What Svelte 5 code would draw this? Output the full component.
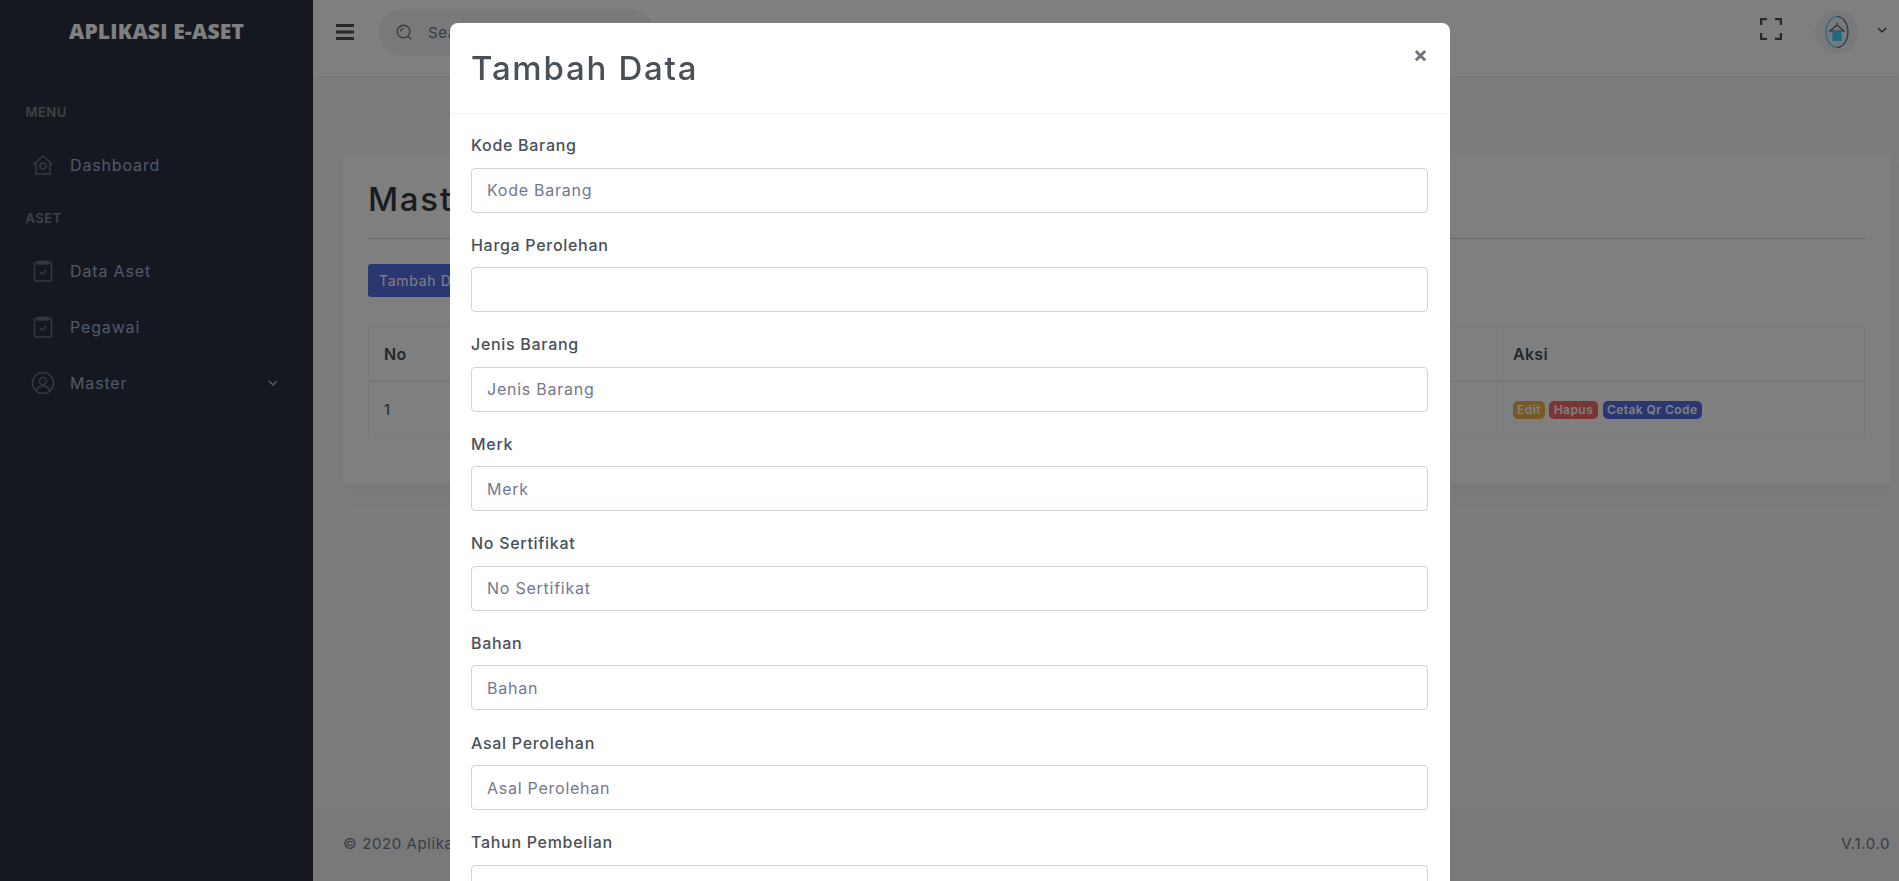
<script>
  const fields = [
    ['Kode Barang', 'Kode Barang'],
    ['Harga Perolehan', ''],
    ['Jenis Barang', 'Jenis Barang'],
    ['Merk', 'Merk'],
    ['No Sertifikat', 'No Sertifikat'],
    ['Bahan', 'Bahan'],
    ['Asal Perolehan', 'Asal Perolehan'],
    ['Tahun Pembelian', '']
  ];
</script>

<div class="layout">
  <aside class="sidebar">
    <div class="logo">APLIKASI E-ASET</div>
    <div class="menu-title first">MENU</div>
    <a class="item">
      <svg viewBox="0 0 24 24" class="mi"><path d="M2.500 11.500 12 3l9.500 8.500M5 9.500V21h14V9.500"/><circle cx="12" cy="13" r="3"/></svg>
      <span>Dashboard</span>
    </a>
    <div class="menu-title">ASET</div>
    <a class="item">
      <svg viewBox="0 0 24 24" class="mi"><rect x="3.500" y="3.500" width="17" height="18.500" rx="1"/><path d="M7 2.500h10v2.500H7z" class="fill"/><path d="m9 13 2.200 2.200L15.500 11"/></svg>
      <span>Data Aset</span>
    </a>
    <a class="item">
      <svg viewBox="0 0 24 24" class="mi"><rect x="3.500" y="3.500" width="17" height="18.500" rx="1"/><path d="M7 2.500h10v2.500H7z" class="fill"/><path d="m9 13 2.200 2.200L15.500 11"/></svg>
      <span>Pegawai</span>
    </a>
    <a class="item">
      <svg viewBox="0 0 24 24" class="mi"><circle cx="12" cy="12" r="10.500"/><circle cx="12" cy="10" r="3.500"/><path d="M5.500 19.500c1-3 3.500-4.500 6.500-4.500s5.500 1.500 6.500 4.500"/></svg>
      <span>Master</span>
      <svg viewBox="0 0 12 12" class="chev"><path d="m2 4 4 4 4-4"/></svg>
    </a>
  </aside>

  <div class="main">
    <header class="topbar">
      <div class="left">
        <svg viewBox="0 0 18 16" class="burger"><path d="M0 1.500h18M0 8h18M0 14.500h18"/></svg>
        <div class="search">
          <svg viewBox="0 0 16 16" class="sicon"><circle cx="7.500" cy="7.500" r="6.300"/><path d="m12 12 3 3.200M4.500 7.500a3 3 0 0 1 3-3"/></svg>
          <span>Search...</span>
        </div>
      </div>
      <div class="right">
        <svg viewBox="0 0 22 22" class="full"><path d="M1 7V1h6M15 1h6v6M21 15v6h-6M7 21H1v-6"/></svg>
        <div class="avatar">
          <svg viewBox="0 0 24 34" class="logo-mark">
            <path d="M12 1.500C6 1.500 1 8.500 1 17s5 15.500 11 15.500" class="ring"/>
            <path d="M12 1.500c6 0 11 7 11 15.500s-5 15.500-11 15.500" class="ring dark"/>
            <path d="M12 10 5 16h14zM12 10V7.500" class="hanger"/>
            <rect x="7.300" y="16" width="9.400" height="10" class="box"/>
          </svg>
        </div>
        <svg viewBox="0 0 12 12" class="chev top"><path d="m2 4 4 4 4-4"/></svg>
      </div>
    </header>

    <section class="page">
      <div class="card">
        <h4>Master Barang</h4>
        <button class="add">Tambah Data</button>
        <table>
          <thead><tr><th class="c1">No</th><th>Kode Barang</th><th class="c3">Aksi</th></tr></thead>
          <tbody>
            <tr>
              <td>1</td>
              <td>001</td>
              <td>
                <span class="badge warn">Edit</span>
                <span class="badge danger">Hapus</span>
                <span class="badge prim">Cetak Qr Code</span>
              </td>
            </tr>
          </tbody>
        </table>
      </div>
    </section>

    <footer class="foot">
      <span>© 2020 Aplikasi E-Aset</span>
      <span>V.1.0.0</span>
    </footer>
  </div>
</div>

<div class="backdrop"></div>
<div class="modal-wrap">
  <div class="modal">
    <div class="mhead">
      <h5>Tambah Data</h5>
      <span class="close">×</span>
    </div>
    <div class="mbody">
      {#each fields as [label, ph]}
        <div class="field">
          <label>{label}</label>
          <input placeholder={ph} />
        </div>
      {/each}
    </div>
  </div>
</div>

<style>
  :global(body) {
    margin: 0;
    font-family: "Inter", "Open Sans", sans-serif;
    color: #495057;
    background: #f8f8fb;
    overflow: hidden;
  }
  .layout { display: flex; height: 881px; }
  .sidebar { width: 313px; flex: none; background: #2a3042; color: #a6b0cf; }
  .logo {
    height: 62px;
    display: flex; align-items: center; justify-content: center;
    font-family: "Open Sans", sans-serif;
    font-weight: 800; font-size: 21px; color: #fff;
    letter-spacing: .2px;
  }
  .menu-title {
    margin: 0 0 0 25.500px;
    font-size: 13px; font-weight: 600; letter-spacing: .5px;
    color: #7f8387;
    height: 20px; line-height: 20px;
    padding-top: 15px; padding-bottom: 15px;
  }
  .menu-title.first { padding-top: 40px; }
  .item {
    display: flex; align-items: center;
    height: 56px; padding-left: 31px; padding-right: 34px;
    font-size: 16px; gap: 15px; letter-spacing: .85px;
  }
  .mi { width: 24px; height: 24px; fill: none; stroke: #6a7187; stroke-width: 1.500; }
  .mi .fill { fill: #6a7187; }
  .chev { width: 12px; height: 12px; fill: none; stroke: currentColor; stroke-width: 1.500; margin-left: auto; }
  .main { flex: 1; display: flex; flex-direction: column; min-width: 0; }
  .topbar {
    height: 76px; background: #fff; flex: none; box-sizing: border-box; padding-bottom: 12px;
    display: flex; justify-content: space-between; align-items: center;
    box-shadow: 0 1px 2px rgba(0,0,0,.05);
  }
  .left { display: flex; align-items: center; padding-left: 23px; gap: 25px; }
  .burger { width: 18px; height: 16px; fill: none; stroke: #495057; stroke-width: 3; }
  .search {
    width: 275px; height: 47px; border-radius: 24px; background: #f3f3f9;
    display: flex; align-items: center; padding-left: 17px; gap: 16px; box-sizing: border-box;
    font-size: 15px; color: #74788d; letter-spacing: .7px;
  }
  .sicon { width: 16px; height: 16px; fill: none; stroke: #74788d; stroke-width: 1.400; }
  .right { display: flex; align-items: center; padding: 0 11px 0 0; }
  .full { width: 22px; height: 22px; fill: none; stroke: #4b5060; stroke-width: 2.500; margin-top: -7px; }
  .avatar {
    width: 44px; height: 44px; border-radius: 50%; background: #f3f3f9;
    display: flex; align-items: center; justify-content: center;
    margin-left: 33px; margin-right: 17px;
  }
  .logo-mark { width: 24px; height: 34px; fill: none; }
  .ring { stroke: #3ad8ff; stroke-width: 1.200; fill: none; }
  .ring.dark { stroke: #566480; }
  .hanger { stroke: #566480; stroke-width: 1.200; }
  .box { fill: #3ad8ff; stroke: none; }
  .top { margin-left: 0; margin-top: -4px; color: #495057; }
  .page { flex: 1; padding: 77px 9px 0 30px; }
  .card {
    background: #fff; border-radius: 4px; padding: 24px 25px 46px 25px;
    box-shadow: 0 .75rem 1.500rem rgba(18,38,63,.03);
    height: 330px; box-sizing: border-box;
  }
  h4 {
    margin: 0; font-size: 33px; font-weight: 500; line-height: 44px; letter-spacing: 1.750px;
    padding-bottom: 17px; border-bottom: 1px solid #d5d5d8; color: #343a40;
  }
  .add {
    display: block; margin-top: 25px; height: 33px; width: 115px;
    border: 0; border-radius: 3px; background: #556ee6; color: #fff;
    font: 400 14px "Inter", sans-serif; letter-spacing: .7px; text-align: left; padding: 0 11px;
    white-space: nowrap;
  }
  table { width: 100%; border-collapse: collapse; margin-top: 29px; font-size: 15px; table-layout: fixed; }
  th, td { border: 1px solid #eff2f7; padding: 0 15px; text-align: left; }
  th { height: 53px; font-size: 16px; font-weight: 600; color: #495057; border-bottom-width: 2px; letter-spacing: .3px; }
  td { height: 55px; }
  .c1 { width: 60px; }
  .c3 { width: 336px; }
  .badge {
    display: inline-block; font-size: 12px; font-weight: 600; color: #fff;
    padding: 0 4px; height: 18px; line-height: 18px; border-radius: 5px; letter-spacing: .45px;
    vertical-align: middle;
  }
  .warn { background: #f1b44c; }
  .danger { background: #f46a6a; padding: 0 4.500px; }
  .prim { background: #556ee6; margin-left: 1px; }
  .foot {
    height: 73px; flex: none; background: #f2f2f5; color: #74788d; box-sizing: border-box;
    display: flex; align-items: center; justify-content: space-between;
    padding: 0 9px 2px 30px; font-size: 15px; letter-spacing: .6px;
  }
  .backdrop { position: fixed; inset: 0; background: rgba(0,0,0,.5); }
  .modal-wrap { position: fixed; inset: 0; overflow: hidden; }
  .modal {
    position: absolute; left: 450px; top: 23px; width: 1000px;
    background: #fff; border-radius: 8px;
  }
  .mhead {
    height: 91px; border-bottom: 1px solid #eff2f7; padding: 0 21px;
    display: flex; align-items: center; justify-content: space-between;
    box-sizing: border-box; position: relative;
  }
  h5 { margin: 0; font-size: 33px; font-weight: 500; letter-spacing: 1.750px; color: #495057; }
  .close { position: absolute; right: 22px; top: 18px; font-size: 22px; font-weight: 700; color: #6c757d; }
  .mbody { padding: 20px 22px 0 21px; }
  .field { height: 99.600px; }
  label { display: block; font-size: 16px; font-weight: 500; line-height: 22px; margin-bottom: 11.500px; color: #495057; letter-spacing: .7px; }
  input {
    display: block; width: 100%; height: 45px; box-sizing: border-box;
    border: 1px solid #ced4da; border-radius: 4px; padding: 0 15px;
    font: 400 16px "Inter", sans-serif; letter-spacing: .75px; color: #495057; background: #fff;
  }
  input::placeholder { color: #74788d; }
</style>
